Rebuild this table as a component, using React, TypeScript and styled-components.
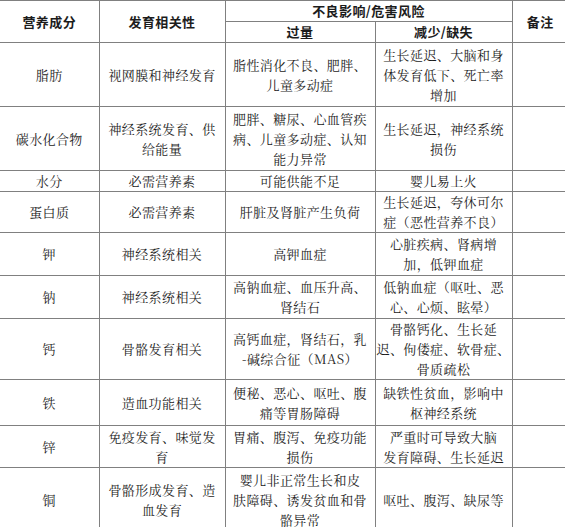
import styled, { createGlobalStyle } from 'styled-components';

const GlobalStyle = createGlobalStyle`
  html, body {
    margin: 0;
    padding: 0;
    background: #ffffff;
  }
  body {
    font-family: "Noto Serif CJK SC", "Noto Sans CJK SC", serif;
    color: #1c1c1c;
  }
`;

const line = '1px solid #808080';

const Table = styled.table`
  border-collapse: collapse;
  table-layout: fixed;
  width: 568px;
  font-size: 13px;
  letter-spacing: 0.4px;
  line-height: 20px;
`;

const Row = styled.tr<{ $h: number }>`
  height: ${(p) => p.$h}px;
`;

const HeadCell = styled.th<{ $last?: boolean }>`
  padding: 0;
  font-family: "Noto Sans CJK SC", sans-serif;
  font-weight: 700;
  font-size: 13px;
  text-align: center;
  vertical-align: middle;
  white-space: nowrap;
  border-top: ${line};
  border-bottom: ${line};
  border-right: ${(p) => (p.$last ? 'none' : line)};
`;

const SubHeadCell = styled(HeadCell)`
  border-top: 1px solid #5a5a5a;
`;

const Cell = styled.td<{ $last?: boolean }>`
  padding: 0;
  text-align: center;
  vertical-align: middle;
  white-space: nowrap;
  border-bottom: ${line};
  border-right: ${(p) => (p.$last ? 'none' : line)};
`;

type Nutrient = {
  name: string;
  dev: string[];
  over: string[];
  lack: string[];
  h: number;
};

const rows: Nutrient[] = [
  {
    name: '脂肪',
    dev: ['视网膜和神经发育'],
    over: ['脂性消化不良、肥胖、', '儿童多动症'],
    lack: ['生长延迟、大脑和身', '体发育低下、死亡率', '增加'],
    h: 64,
  },
  {
    name: '碳水化合物',
    dev: ['神经系统发育、供', '给能量'],
    over: ['肥胖、糖尿、心血管疾', '病、儿童多动症、认知', '能力异常'],
    lack: ['生长延迟，神经系统', '损伤'],
    h: 64,
  },
  { name: '水分', dev: ['必需营养素'], over: ['可能供能不足'], lack: ['婴儿易上火'], h: 20 },
  {
    name: '蛋白质',
    dev: ['必需营养素'],
    over: ['肝脏及肾脏产生负荷'],
    lack: ['生长延迟，夸休可尔', '症（恶性营养不良）'],
    h: 41,
  },
  {
    name: '钾',
    dev: ['神经系统相关'],
    over: ['高钾血症'],
    lack: ['心脏疾病、肾病增', '加，低钾血症'],
    h: 43,
  },
  {
    name: '钠',
    dev: ['神经系统相关'],
    over: ['高钠血症、血压升高、', '肾结石'],
    lack: ['低钠血症（呕吐、恶', '心、心烦、眩晕）'],
    h: 43,
  },
  {
    name: '钙',
    dev: ['骨骼发育相关'],
    over: ['高钙血症，肾结石，乳', '-碱综合征（MAS）'],
    lack: ['骨骼钙化、生长延', '迟、佝偻症、软骨症、', '骨质疏松'],
    h: 58,
  },
  {
    name: '铁',
    dev: ['造血功能相关'],
    over: ['便秘、恶心、呕吐、腹', '痛等胃肠障碍'],
    lack: ['缺铁性贫血，影响中', '枢神经系统'],
    h: 46,
  },
  {
    name: '锌',
    dev: ['免疫发育、味觉发', '育'],
    over: ['胃痛、腹泻、免疫功能', '损伤'],
    lack: ['严重时可导致大脑', '发育障碍、生长延迟'],
    h: 42,
  },
  {
    name: '铜',
    dev: ['骨骼形成发育、造', '血发育'],
    over: ['婴儿非正常生长和皮', '肤障碍、诱发贫血和骨', '骼异常'],
    lack: ['呕吐、腹泻、缺尿等'],
    h: 64,
  },
];

const Lines = ({ lines }: { lines: string[] }) => (
  <>
    {lines.map((l, i) => (
      <span key={i}>
        {i > 0 && <br />}
        {l}
      </span>
    ))}
  </>
);

export default function App() {
  return (
    <>
      <GlobalStyle />
      <Table>
        <colgroup>
          <col style={{ width: 99 }} />
          <col style={{ width: 126 }} />
          <col style={{ width: 150 }} />
          <col style={{ width: 137 }} />
          <col style={{ width: 56 }} />
        </colgroup>
        <thead>
          <Row $h={21}>
            <HeadCell rowSpan={2}>营养成分</HeadCell>
            <HeadCell rowSpan={2}>发育相关性</HeadCell>
            <HeadCell colSpan={2}>不良影响/危害风险</HeadCell>
            <HeadCell rowSpan={2} $last>
              备注
            </HeadCell>
          </Row>
          <Row $h={21}>
            <SubHeadCell>过量</SubHeadCell>
            <SubHeadCell>减少/缺失</SubHeadCell>
          </Row>
        </thead>
        <tbody>
          {rows.map((r) => (
            <Row key={r.name} $h={r.h}>
              <Cell>{r.name}</Cell>
              <Cell>
                <Lines lines={r.dev} />
              </Cell>
              <Cell>
                <Lines lines={r.over} />
              </Cell>
              <Cell>
                <Lines lines={r.lack} />
              </Cell>
              <Cell $last />
            </Row>
          ))}
        </tbody>
      </Table>
    </>
  );
}
